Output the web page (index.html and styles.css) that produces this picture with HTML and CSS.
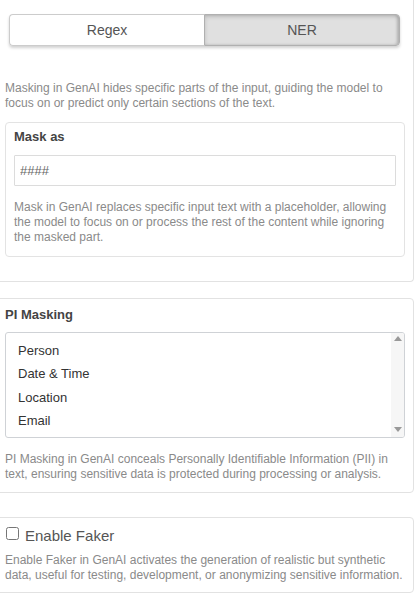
FILE: index.html
```html
<!DOCTYPE html>
<html lang="en">
<head>
<meta charset="utf-8">
<title>Masking settings</title>
<link rel="stylesheet" href="styles.css">
</head>
<body>
<div class="page">
  <section class="panel panel-top">
    <div class="toggle">
      <button class="toggle-btn first" type="button">Regex</button>
      <button class="toggle-btn active" type="button">NER</button>
    </div>
    <p class="help intro">Masking in GenAI hides specific parts of the input, guiding the model to focus on or predict only certain sections of the text.</p>
    <div class="subcard">
      <label class="title" for="mask">Mask as</label>
      <input id="mask" class="text-input" type="text" value="####">
      <p class="help gap">Mask in GenAI replaces specific input text with a placeholder, allowing the model to focus on or process the rest of the content while ignoring the masked part.</p>
    </div>
  </section>

  <section class="panel panel-pi">
    <div class="title title-pi">PI Masking</div>
    <div class="listbox">
      <ul class="options">
        <li>Person</li>
        <li>Date &amp; Time</li>
        <li>Location</li>
        <li>Email</li>
      </ul>
      <div class="scrollbar">
        <span class="arrow up"></span>
        <span class="arrow down"></span>
      </div>
    </div>
    <p class="help gap">PI Masking in GenAI conceals Personally Identifiable Information (PII) in text, ensuring sensitive data is protected during processing or analysis.</p>
  </section>

  <section class="panel panel-faker">
    <label class="check"><input type="checkbox" class="checkbox"><span>Enable Faker</span></label>
    <p class="help faker-help">Enable Faker in GenAI activates the generation of realistic but synthetic data, useful for testing, development, or anonymizing sensitive information.</p>
  </section>
</div>
</body>
</html>
```

FILE: styles.css
```css
html, body {
  margin: 0;
  padding: 0;
  background: #fff;
}

body {
  font-family: "Liberation Sans", Arial, sans-serif;
  color: #333;
}

.page {
  width: 420px;
  height: 596px;
  overflow: hidden;
}

.panel {
  margin: 0 6px 0 -6px;
  border: 1px solid #e2e2e2;
  border-radius: 4px;
  padding: 0 8px 0 10px;
}

.panel-top {
  border-top: 0;
  border-radius: 0 0 4px 4px;
  padding-top: 14px;
  padding-bottom: 24px;
}

.toggle {
  display: flex;
  height: 32px;
  margin: 0 5px 0 4px;
  border-radius: 4px;
  box-shadow: 0 2px 3px rgba(0, 0, 0, 0.18);
}

.toggle-btn {
  flex: 1;
  height: 32px;
  padding: 0;
  margin: 0;
  font-family: "Liberation Sans", Arial, sans-serif;
  font-size: 14px;
  color: #555;
  background: #fff;
  border: 1px solid #ccc;
}

.toggle-btn.first {
  border-radius: 4px 0 0 4px;
  border-right: 0;
}

.toggle-btn.active {
  background: #e0e0e0;
  border-color: #b0b0b0;
  border-radius: 0 4px 4px 0;
  box-shadow: inset 0 2px 4px rgba(0, 0, 0, 0.14), inset -2px 0 3px rgba(0, 0, 0, 0.16);
}

.help {
  margin: 0;
  font-size: 12px;
  line-height: 15px;
  color: #8a8a8a;
}

.intro {
  margin-top: 35px;
}

.subcard {
  margin-top: 11px;
  border: 1px solid #e3e3e3;
  border-radius: 4px;
  padding: 6px 8px 11px 8px;
}

.title {
  display: block;
  font-size: 13px;
  line-height: 16px;
  font-weight: bold;
  color: #444;
}

.subcard .title {
  margin-bottom: 10px;
}

.text-input {
  display: block;
  box-sizing: border-box;
  width: 100%;
  height: 31px;
  margin: 0;
  padding: 0 5px;
  border: 1px solid #dcdcdc;
  border-radius: 1px;
  font-family: "Liberation Sans", Arial, sans-serif;
  font-size: 13px;
  color: #666;
  background: #fff;
  outline: none;
}

.gap {
  margin-top: 14px;
}

.panel-pi {
  margin-top: 16px;
  padding-top: 8px;
  padding-bottom: 10px;
}

.title-pi {
  margin-bottom: 9px;
}

.listbox {
  display: flex;
  box-sizing: border-box;
  height: 106px;
  border: 1px solid #cfd2d6;
  border-radius: 3px;
  overflow: hidden;
}

.options {
  flex: 1;
  list-style: none;
  margin: 0;
  padding: 6px 0 0 12px;
  font-size: 13px;
  line-height: 23.3px;
  color: #333;
}

.scrollbar {
  width: 13px;
  background: #f6f6f6;
  display: flex;
  flex-direction: column;
  justify-content: space-between;
  align-items: center;
  padding: 3px 0 5px;
  box-sizing: border-box;
}

.arrow {
  display: block;
  width: 0;
  height: 0;
  border-left: 4px solid transparent;
  border-right: 4px solid transparent;
}

.arrow.up {
  border-bottom: 5px solid #999;
}

.arrow.down {
  border-top: 5px solid #999;
}

.panel-faker {
  margin-top: 24px;
  padding-top: 9px;
  padding-bottom: 9px;
}

.check {
  display: flex;
  align-items: flex-start;
  font-size: 15px;
  line-height: 18px;
  color: #555;
}

.checkbox {
  width: 13px;
  height: 13px;
  margin: 0 6px 0 1px;
}

.faker-help {
  margin-top: 8px;
}
```
